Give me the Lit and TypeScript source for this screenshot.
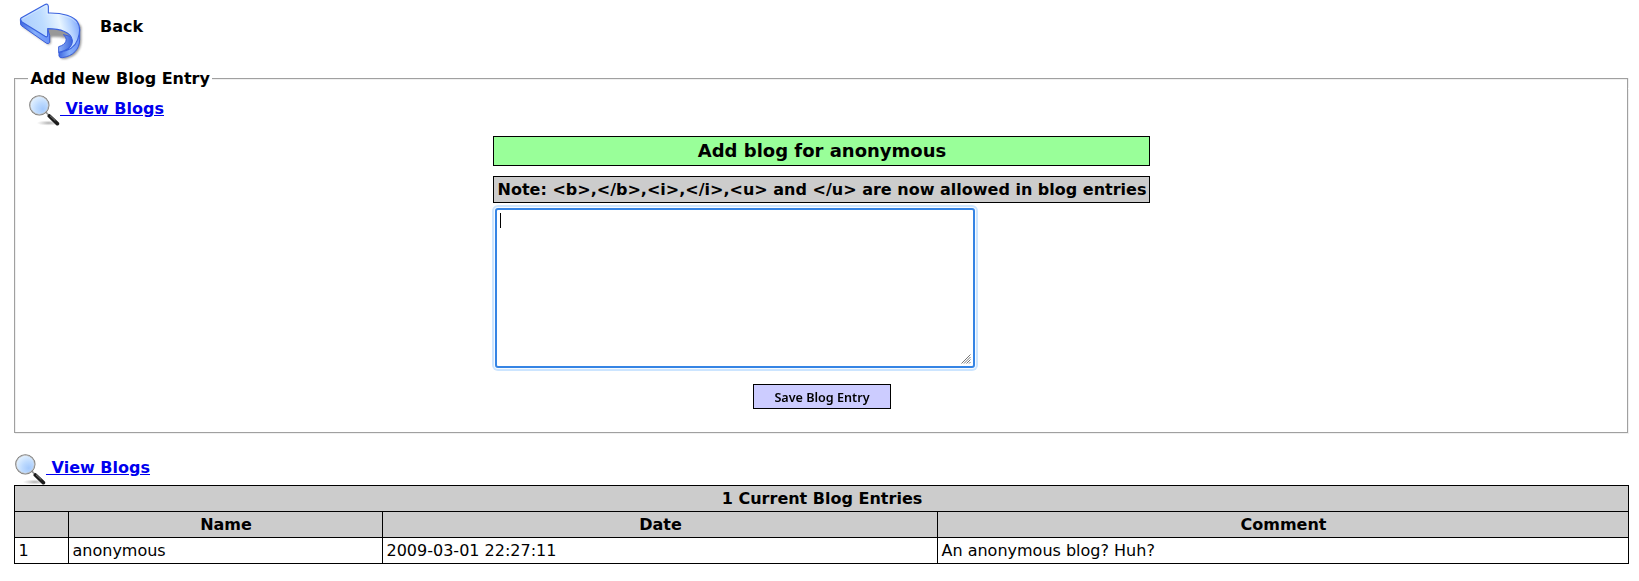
import { LitElement, html, css } from "lit";
import { customElement, property } from "lit/decorators.js";

@customElement("back-arrow")
class BackArrow extends LitElement {
  static styles = css`
    :host { display: block; width: 80px; height: 64px; }
    svg { display: block; }
  `;
  render() {
    return html`<svg width="80" height="64" viewBox="0 0 240 192">
      <defs>
        <linearGradient id="face" x1="0" y1="0.6" x2="1" y2="0.4">
          <stop offset="0" stop-color="#a9cbfd" />
          <stop offset="0.4" stop-color="#bddcff" />
          <stop offset="0.68" stop-color="#e8f5ff" />
          <stop offset="0.85" stop-color="#b4d2ff" />
          <stop offset="1" stop-color="#7ba4fb" />
        </linearGradient>
        <linearGradient id="side" x1="0" y1="0" x2="1" y2="0">
          <stop offset="0" stop-color="#3f68e0" />
          <stop offset="0.5" stop-color="#86b0fb" />
          <stop offset="1" stop-color="#6790f6" />
        </linearGradient>
        <linearGradient id="inner" x1="0" y1="0" x2="1" y2="0">
          <stop offset="0" stop-color="#8fb2fa" />
          <stop offset="1" stop-color="#2f58d6" />
        </linearGradient>
        <filter id="soft" x="-20%" y="-20%" width="140%" height="140%">
          <feGaussianBlur stdDeviation="2.5" />
        </filter>
      </defs>
      <path filter="url(#soft)" fill="#555" opacity=".6"
        d="M34 78L116 134L123 130V112C150 109 172 114 185 124L150 146L152 174Q156 179 170 176C198 170 213 149 214 124V80L200 62Z" />
      <path fill="url(#side)" stroke="#3a5edb" stroke-width="3" stroke-linejoin="round"
        d="M31 58L32 74Q34 78 40 81L110 130Q115 133 119 127V106L112 84Z" />
      <path fill="url(#inner)" stroke="#3a5edb" stroke-width="3" stroke-linejoin="round"
        d="M160 104C175 115 170 134 146 140V158L190 150L193 112Z" />
      <path fill="url(#side)" stroke="#3a5edb" stroke-width="3" stroke-linejoin="round"
        d="M209 82V118C209 148 190 168 157 173Q149 175 147 168V157C174 154 187 138 187 122C187 112 180 102 168 96Z" />
      <path fill="url(#face)" stroke="#3a62de" stroke-width="3.4" stroke-linejoin="round"
        d="M33 54L104 14Q114 9 115 19V39C158 38 193 49 203 67C212 81 210 99 203 119C196 139 178 153 148 157C176 150 188 137 187 121C184 97 151 86 113 86V106Q112 113 105 109L36 66Q29 59 33 54Z" />
      <path fill="none" stroke="#eaf5ff" stroke-width="1.6" opacity=".8"
        d="M38 56L106 18Q111 16 111 23V43C157 42 187 52 199 68" />
    </svg>`;
  }
}

@customElement("view-link")
class ViewLink extends LitElement {
  static styles = css`
    :host { display: flex; height: 32px; }
    svg { display: block; flex: none; }
    a {
      color: #0000ee; font-weight: bold; line-height: 19px; white-space: pre;
      margin-top: 5px; text-decoration: underline; height: 19px;
    }
  `;
  render() {
    return html`<svg width="32" height="32" viewBox="0 0 96 96">
        <defs>
          <radialGradient id="glass" cx=".68" cy=".7" r=".75">
            <stop offset="0" stop-color="#a4c9fc" />
            <stop offset=".45" stop-color="#bddafe" />
            <stop offset="1" stop-color="#e6f3ff" />
          </radialGradient>
          <radialGradient id="shade">
            <stop offset="0" stop-color="#777" stop-opacity=".6" />
            <stop offset="1" stop-color="#999" stop-opacity="0" />
          </radialGradient>
        </defs>
        <ellipse cx="62" cy="87" rx="36" ry="8" fill="url(#shade)" />
        <path d="M54 55L65 66" stroke="#999" stroke-width="5" />
        <path d="M64 66L88 89" stroke="#1c1c1c" stroke-width="11" stroke-linecap="round" />
        <path d="M66 65L82 80" stroke="#999" stroke-width="2.4" />
        <circle cx="34" cy="34" r="28.5" fill="url(#glass)" stroke="#777" stroke-width="4" />
        <circle cx="34" cy="34" r="27" fill="none" stroke="#dcdcdc" stroke-width="2" />
      </svg><a> View Blogs</a>`;
  }
}

interface Entry { name: string; date: string; comment: string; }

@customElement("app-root")
class AppRoot extends LitElement {
  @property({ attribute: false }) entries: Entry[] = [
    { name: "anonymous", date: "2009-03-01 22:27:11", comment: "An anonymous blog? Huh?" },
  ];

  static styles = css`
    :host {
      display: block; box-sizing: border-box; height: 581px; padding: 0 10px;
      background: #fff; color: #000; overflow: hidden;
      font: 16px/19px "DejaVu Sans", sans-serif;
    }
    .back { display: flex; height: 69px; }
    .back b { margin: 17px 0 0 10px; height: 19px; }
    .page { padding-left: 4px; width: 1615px; }
    .outline { display: flex; flex-direction: column; box-sizing: border-box; height: 365px; }
    .legend-row { display: grid; grid-template-columns: 14px auto 1fr; height: 19px; flex: none; }
    .rule { margin-top: 9px; border-top: 1px solid #a0a0a0; box-shadow: inset 0 1px #f0f0f0; }
    .rule.first { border-left: 1px solid #a0a0a0; box-shadow: inset 1px 1px #f0f0f0; }
    .rule.last { border-right: 1px solid #a0a0a0; margin-right: 1px; box-shadow: inset 0 1px #f0f0f0, 1px 0 #f0f0f0; }
    .legend { padding: 0 2px 0 2.5px; font-weight: bold; }
    .content {
      flex: 1; border: 1px solid #a0a0a0; border-top: 0; margin: 0 1px 1px 0; padding: 6px 12px 0 13px;
      box-shadow: inset 1px 0 #f0f0f0, 1px 1px #f0f0f0;
    }
    .form { width: 657px; margin: 10px auto 0; }
    .title, .note {
      box-sizing: border-box; border: 1px solid #000; text-align: center;
      font-weight: bold; white-space: nowrap;
    }
    .title { height: 30px; font-size: 18px; line-height: 27px; background: #99ff99; padding-left: 1px; }
    .note { height: 27px; line-height: 25px; margin-top: 10px; background: #cccccc; padding-left: 1px; }
    .area {
      box-sizing: border-box; display: flex; justify-content: space-between; width: 480px; height: 160px;
      margin: 5px 0 0 2px; border: 2px solid #3584e4; border-radius: 3px; padding: 3px 2px 2px 3px;
      box-shadow: 0 0 0 1px #f7fbff, 0 0 0 3px #cce5ff; background: #fff;
    }
    .caret { width: 1px; height: 15px; background: #000; }
    .grip { align-self: flex-end; display: block; }
    .save {
      display: block; box-sizing: border-box; width: 138px; height: 25px; margin: 16px 0 0 260px;
      padding: 1px 0 0; background: #ccccff; border: 1px solid #000; border-radius: 0; color: #000;
      text-align: center; font: 600 13.33px/22px "Noto Sans", sans-serif; white-space: nowrap;
    }
    .save span { display: block; transform: scaleX(0.945); }
    .lower { margin-top: 19px; }
    .grid {
      display: grid; grid-template-columns: 54px 314px 555px 692px; box-sizing: border-box;
      height: 79px; grid-template-rows: 26px 26px 26px; border-top: 1px solid #000;
    }
    .cell {
      box-sizing: border-box; border: 1px solid #000; border-width: 0 0 1px 1px;
      padding-left: 3.5px; line-height: 25px; height: 26px;
    }
    .cell.end { border-right-width: 1px; }
    .head { background: #cccccc; font-weight: bold; text-align: center; padding: 0 0 0 1px; }
    .all { grid-column: 1 / -1; }
  `;

  render() {
    return html`
      <div class="back"><back-arrow></back-arrow><b>Back</b></div>
      <div class="page">
        <div class="outline">
          <div class="legend-row">
            <span class="rule first"></span><span class="legend">Add New Blog Entry</span><span class="rule last"></span>
          </div>
          <div class="content">
            <view-link></view-link>
            <div class="form">
              <div class="title">Add blog for anonymous</div>
              <div class="note">Note: &lt;b&gt;,&lt;/b&gt;,&lt;i&gt;,&lt;/i&gt;,&lt;u&gt; and &lt;/u&gt; are now allowed in blog entries</div>
              <div class="area">
                <span class="caret"></span>
                <svg class="grip" width="10" height="10" viewBox="0 0 10 10">
                  <path d="M.5 9.5L9.5 .5M3 9.5L9.5 3M5.5 9.5L9.5 5.5M8 9.5L9.5 8" stroke="#666" stroke-width=".9" />
                </svg>
              </div>
              <button class="save"><span>Save Blog Entry</span></button>
            </div>
          </div>
        </div>
        <view-link class="lower"></view-link>
        <div class="grid">
          <div class="cell head all end">${this.entries.length} Current Blog Entries</div>
          <div class="cell head"></div><div class="cell head">Name</div>
          <div class="cell head">Date</div><div class="cell head end">Comment</div>
          ${this.entries.map((e, i) => html`
            <div class="cell">${i + 1}</div><div class="cell">${e.name}</div>
            <div class="cell">${e.date}</div><div class="cell end">${e.comment}</div>`)}
        </div>
      </div>`;
  }
}
